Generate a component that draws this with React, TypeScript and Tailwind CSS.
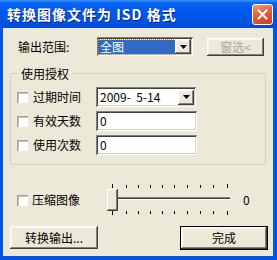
import React from 'react';

const raised =
  'bg-[#ECE9D8] shadow-[inset_-1px_-1px_#404040,inset_1px_1px_#ffffff,inset_-2px_-2px_#808080,inset_2px_2px_#F5F4EE]';
const sunken =
  'bg-white shadow-[inset_1px_1px_#808080,inset_-1px_-1px_#ffffff,inset_2px_2px_#404040,inset_-2px_-2px_#D4D0C8]';

function Checkbox() {
  return (
    <div className="w-[11px] h-[11px] shrink-0 bg-white shadow-[inset_1px_1px_#A0A0A0,inset_2px_2px_#C8C5B8]" />
  );
}

function DropButton() {
  return (
    <div className={`w-[16px] h-[15px] flex items-center justify-center ${raised}`}>
      <svg width="7" height="4" viewBox="0 0 7 4">
        <path d="M0 0h7L3.5 4z" fill="#000" />
      </svg>
    </div>
  );
}

function Field({ value }: { value: string }) {
  return (
    <div className={`w-[101px] h-[20px] flex items-center pl-[4px] text-[12px] leading-none ${sunken}`}>
      {value}
    </div>
  );
}

function Slider() {
  const ticks = [5, 19, 31, 43, 55, 67, 80, 93, 106, 120];
  return (
    <svg width="124" height="32" viewBox="0 0 124 32">
      {ticks.map((x, i) => {
        const end = i === 0 || i === ticks.length - 1;
        return (
          <g key={i}>
            <rect x={x} y={end ? 0 : 1} width="1" height={end ? 4 : 3} fill="#000" />
            <rect x={x} y={27} width="1" height={end ? 4 : 3} fill="#000" />
          </g>
        );
      })}
      {/* track */}
      <rect x="5" y="13" width="118" height="1" fill="#808080" />
      <rect x="5" y="14" width="118" height="1" fill="#404040" />
      <rect x="5" y="15" width="118" height="1" fill="#ffffff" />
      {/* thumb */}
      <rect x="0" y="5" width="11" height="22" fill="#404040" />
      <rect x="0" y="5" width="10" height="21" fill="#ffffff" />
      <rect x="1" y="6" width="9" height="20" fill="#808080" />
      <rect x="1" y="6" width="8" height="19" fill="#ECE9D8" />
    </svg>
  );
}

export default function App() {
  return (
    <div className="w-[277px] h-[260px] bg-[#0055EA] flex flex-col font-['Noto_Sans_CJK_SC',sans-serif] text-black">
      {/* Title bar */}
      <div className="h-[28px] shrink-0 flex items-center justify-between pl-[7px] pr-[4px] bg-[linear-gradient(180deg,#3D95FF_0%,#0A66F4_10%,#0058EE_40%,#0054E3_80%,#0048D8_100%)]">
        <span className="text-white font-bold text-[14px] leading-none tracking-[1px] whitespace-pre [text-shadow:1px_1px_#0A1E80]">
          转换图像文件为 ISD 格式
        </span>
        <div className="w-[21px] h-[21px] rounded-[3px] border border-white bg-[linear-gradient(160deg,#F39A7C_0%,#E2603C_45%,#C9401C_100%)] flex items-center justify-center">
          <svg width="11" height="11" viewBox="0 0 11 11">
            <path d="M1.5 1.5l8 8M9.5 1.5l-8 8" stroke="#fff" strokeWidth="2" strokeLinecap="square" />
          </svg>
        </div>
      </div>

      {/* Body */}
      <div className="flex-1 ml-[3px] mr-[4px] mb-[4px] bg-[#ECE9D8] flex flex-col pl-[7px] pr-[5px] pt-[9px] text-[12px]">
        {/* Output range */}
        <div className="flex items-center h-[19px]">
          <span className="ml-[8px] w-[79px] leading-none">输出范围:</span>
          <div className={`w-[96px] h-[19px] flex items-center justify-between pl-[2px] pr-[2px] ${sunken}`}>
            <span className="w-[78px] h-[14px] bg-[#316AC5] text-white leading-[14px] pl-[1px] outline outline-1 outline-dotted outline-[#CE9531]">
              全图
            </span>
            <DropButton />
          </div>
          <div className={`ml-[14px] w-[57px] h-[18px] flex items-center justify-center text-[#ACA899] leading-none ${raised}`}>
            窗选&lt;
          </div>
        </div>

        {/* License group */}
        <div className="mt-[17px] w-[256px] h-[92px] border border-[#D0D0BF] rounded-[3px] relative flex flex-col gap-[4px] pt-[13px] pl-[6px]">
          <span className="absolute -top-[8px] left-[7px] px-[3px] bg-[#ECE9D8] leading-[16px]">使用授权</span>
          <div className="flex items-center h-[20px]">
            <div className="w-[79px] flex items-center">
              <Checkbox />
              <span className="ml-[5px] leading-none">过期时间</span>
            </div>
            <div className={`w-[100px] h-[20px] flex items-center justify-between pl-[4px] pr-[2px] ${sunken}`}>
              <span className="leading-none whitespace-pre">2009-  5-14</span>
              <DropButton />
            </div>
          </div>
          <div className="flex items-center h-[20px]">
            <div className="w-[79px] flex items-center">
              <Checkbox />
              <span className="ml-[5px] leading-none">有效天数</span>
            </div>
            <Field value="0" />
          </div>
          <div className="flex items-center h-[20px]">
            <div className="w-[79px] flex items-center">
              <Checkbox />
              <span className="ml-[5px] leading-none">使用次数</span>
            </div>
            <Field value="0" />
          </div>
        </div>

        {/* Compression */}
        <div className="mt-[19px] h-[32px] flex items-center">
          <div className="ml-[7px] w-[90px] flex items-center">
            <Checkbox />
            <span className="ml-[4px] leading-none">压缩图像</span>
          </div>
          <Slider />
          <span className="ml-[12px] leading-none">0</span>
        </div>

        {/* Buttons */}
        <div className="mt-[10px] flex justify-between">
          <div className={`w-[88px] h-[23px] flex items-center justify-center leading-none ${raised}`}>
            转换输出...
          </div>
          <div className="w-[88px] h-[24px] border border-black">
            <div className={`w-full h-full flex items-center justify-center leading-none ${raised}`}>完成</div>
          </div>
        </div>
      </div>
    </div>
  );
}
